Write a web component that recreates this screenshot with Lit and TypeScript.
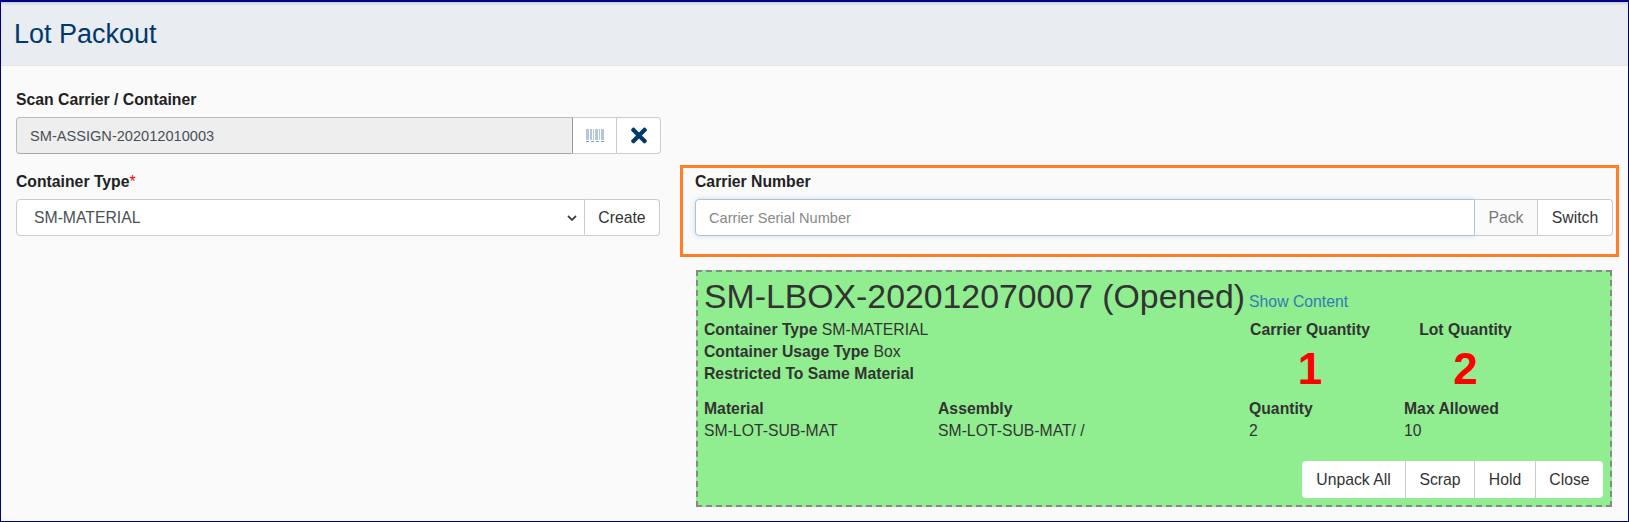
import { LitElement, html, css } from "lit";
import { customElement } from "lit/decorators.js";

@customElement("app-root")
export class AppRoot extends LitElement {
  static styles = css`
    :host { display: block; font-family: "Liberation Sans", Arial, sans-serif; font-size: 15.75px; line-height: 22px; color: #333; }
    * { box-sizing: border-box; }
    .frame { width: 1629px; height: 522px; border: 1px solid #000080; border-top-width: 2px; background: #fafafa; overflow: hidden; }
    .head { height: 64px; background: #e9ecf1; border-bottom: 1px solid #e4e6ea; padding: 15px 13px 0; box-shadow: inset 0 3px 3px -2px #b9bfd0; }
    h1 { margin: 0; font-size: 27px; font-weight: 400; line-height: 34px; color: #003a6b; }
    .body { display: grid; grid-template-columns: 645px 939px; column-gap: 19px; padding: 0 0 0 15px; }
    .scan { grid-column: 1; padding-top: 22px; margin-bottom: 16px; }
    .type { grid-column: 1; grid-row: 2; margin-right: 1px; }
    .carrier { grid-column: 2; grid-row: 2; height: 92px; border: 3px solid #ff7f27; padding: 2px 3px 0 12px; margin-top: -5px; }
    .box { grid-column: 2; grid-row: 3; margin: 13px 0 0 16px; width: 916px; height: 237px; background: #90ee90; border: 2px dashed #888; padding: 2px 7px 2px 6px; }
    label { display: block; font-weight: 700; margin: 0 0 6px; padding-top: 1px; line-height: 22px; color: #222; }
    .req { color: #f00; font-weight: 400; }
    .group { display: flex; height: 37px; position: relative; }
    input, select, button { font: inherit; height: 37px; margin: 0; }
    input, select { flex: 1; min-width: 0; border: 1px solid #ccc; border-radius: 4px 0 0 4px; padding: 0 13px; background: #fff; color: #495057; outline: none; }
    input { font-size: 14.6px; }
    select { appearance: none; padding-left: 17px; }
    .chev { position: absolute; left: 551px; top: 16px; }
    input:disabled { background: #eee; border-color: #bbb; border-right-color: #999; border-bottom-color: #aaa; }
    input::placeholder { color: #888; }
    .focus { border-color: #a9c3dc; box-shadow: 0 0 5px rgba(120, 165, 215, .35); }
    button { background: #fff; border: 1px solid #ccc; border-left: 0; color: #333; padding: 0 14px; }
    button:last-child { border-radius: 0 4px 4px 0; }
    button.off { background: #fafafa; color: #777; }
    .ico { width: 44px; padding: 0; display: flex; align-items: center; justify-content: center; }
    .create { width: 75px; padding: 0; }
    .pack { width: 63px; padding: 0; }
    .switch { width: 75px; padding: 0; }
    h2 { margin: 0; font-size: 33.8px; font-weight: 400; line-height: 44px; display: flex; align-items: baseline; }
    h2 a { font-size: 15.75px; line-height: 22px; color: #337ab7; margin-left: 4px; position: relative; top: -1px; }
    .top { display: grid; grid-template-columns: 546px 120px 191px; margin-top: 1px; }
    .c { text-align: center; font-weight: 700; }
    .big { display: block; color: #f00; font-size: 44px; line-height: 56px; }
    .items { display: grid; grid-template-columns: 234px 311px 155px 1fr; margin-top: 1px; }
    b { font-weight: 700; }
    .acts { display: flex; justify-content: flex-end; margin: 19px 0 0; }
    .acts button { border: 0; border-left: 1px solid #ccc; height: 37px; padding: 0; }
    .acts button:first-child { border-left: 0; border-radius: 4px 0 0 4px; }
    .w1 { width: 103px; } .w2 { width: 69px; } .w3 { width: 61px; } .w4 { width: 68px; }
  `;

  render() {
    return html`<div class="frame">
      <div class="head"><h1>Lot Packout</h1></div>
      <div class="body">
        <div class="scan">
          <label>Scan Carrier / Container</label>
          <div class="group">
            <input disabled value="SM-ASSIGN-202012010003" />
            <button class="ico">
              <svg width="18" height="13" viewBox="0 0 18 13" fill="#b4c7da">
                <path d="M0 0h3v11H0zM4 0h2v11H4zM7 0h1v11H7zM9 0h3v11H9zM13 0h1v11h-1zM15 0h3v11h-3z"/>
                <path d="M0 12h3v1H0zM5 12h3v1H5zM10 12h3v1h-3zM15 12h3v1h-3z" fill="#7f9fc0"/>
              </svg>
            </button>
            <button class="ico">
              <svg width="16" height="23" viewBox="0 0 352 512" fill="#003a6b"><path d="M242.72 256l100.07-100.07c12.28-12.28 12.28-32.19 0-44.48l-22.24-22.24c-12.28-12.28-32.19-12.28-44.48 0L176 189.28 75.93 89.21c-12.28-12.28-32.19-12.28-44.48 0L9.21 111.45c-12.28 12.28-12.28 32.19 0 44.48L109.28 256 9.21 356.07c-12.28 12.28-12.28 32.19 0 44.48l22.24 22.24c12.28 12.28 32.2 12.28 44.48 0L176 322.72l100.07 100.07c12.28 12.28 32.2 12.28 44.48 0l22.24-22.24c12.28-12.28 12.28-32.19 0-44.48L242.72 256z"/></svg>
            </button>
          </div>
        </div>
        <div class="type">
          <label>Container Type<span class="req">*</span></label>
          <div class="group">
            <select><option>SM-MATERIAL</option></select>
            <svg class="chev" width="10" height="6" viewBox="0 0 10 6" fill="none" stroke="#444" stroke-width="1.8"><path d="M1 1l4 4 4-4"/></svg>
            <button class="create">Create</button>
          </div>
        </div>
        <div class="carrier">
          <label>Carrier Number</label>
          <div class="group">
            <input class="focus" placeholder="Carrier Serial Number" />
            <button class="pack off">Pack</button>
            <button class="switch">Switch</button>
          </div>
        </div>
        <div class="box">
          <h2>SM-LBOX-202012070007 (Opened)<a>Show Content</a></h2>
          <div class="top">
            <div>
              <div><b>Container Type</b> SM-MATERIAL</div>
              <div><b>Container Usage Type</b> Box</div>
              <div><b>Restricted To Same Material</b></div>
            </div>
            <div class="c">Carrier Quantity<span class="big">1</span></div>
            <div class="c">Lot Quantity<span class="big">2</span></div>
          </div>
          <div class="items">
            <div><b>Material</b><br />SM-LOT-SUB-MAT</div>
            <div><b>Assembly</b><br />SM-LOT-SUB-MAT/ /</div>
            <div><b>Quantity</b><br />2</div>
            <div><b>Max Allowed</b><br />10</div>
          </div>
          <div class="acts">
            <button class="w1">Unpack All</button>
            <button class="w2">Scrap</button>
            <button class="w3">Hold</button>
            <button class="w4">Close</button>
          </div>
        </div>
      </div>
    </div>`;
  }
}
